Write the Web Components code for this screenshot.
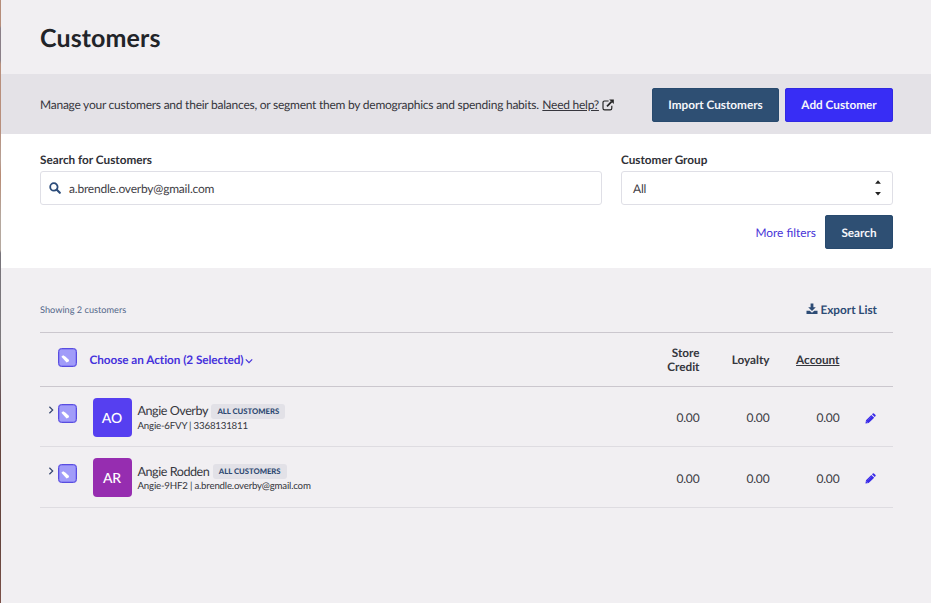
<!DOCTYPE html>
<html lang="en">
<head>
<meta charset="utf-8">
<title>Customers</title>
<style>
html,body{margin:0;height:100%;overflow:hidden}
body{font-family:Lato,"Liberation Sans",sans-serif;font-size:11.75px;color:#3a3b42;background:#f1eff2;text-rendering:geometricPrecision}
</style>
</head>
<body>
<customers-page></customers-page>
<script>
const define = (name, markup, setup) => {
  const t = document.createElement('template');
  t.innerHTML = '<style>*{box-sizing:border-box}:host{box-sizing:border-box}</style>' + markup;
  customElements.define(name, class extends HTMLElement {
    constructor() {
      super();
      this.attachShadow({mode: 'open'}).appendChild(t.content.cloneNode(true));
    }
    connectedCallback() { if (setup) setup(this, this.shadowRoot); }
  });
};

const icons = {
  search: ['0 0 12 12', '<circle cx="4.9" cy="4.9" r="3.7" fill="none" stroke="currentColor" stroke-width="1.8"/><path d="M7.8 7.8 10.8 10.8" stroke="currentColor" stroke-width="2.1" stroke-linecap="round"/>'],
  external: ['0 0 12 12', '<path d="M6.6 2H2.6Q1 2 1 3.6v5.6Q1 10.8 2.6 10.8h5.6Q9.8 10.8 9.8 9.2V6.8" fill="none" stroke="currentColor" stroke-width="1.15"/><path d="M5 7.4 9.6 2.6" stroke="currentColor" stroke-width="1.7"/><path d="M7.2.5h4.6v4.6z" fill="currentColor"/>'],
  download: ['0 0 12 12', '<path fill="currentColor" d="M4.6.6h2.8v3.6h2.4L6 8 2.2 4.2h2.4zM.5 7.7h3.2L6 9.7l2.3-2h3.2v3.4H.5z"/>'],
  down: ['0 0 8 8', '<path d="M.8 2.4 4 5.6 7.2 2.4" fill="none" stroke="currentColor" stroke-width="1.2"/>'],
  right: ['0 0 8 8', '<path d="M2.4.8 5.7 4 2.4 7.2" fill="none" stroke="currentColor" stroke-width="1.2"/>'],
  sort: ['0 0 8 18', '<path fill="#222" d="M1.1 4.8 4 1.2 6.9 4.8zM1.1 13 4 16.4 6.9 13z"/>'],
  pencil: ['0 0 12 12', '<path fill="currentColor" d="M.5 11.5 1.1 8 6.9 2.1l3.1 3L4 10.9zM7.6 1.4l.9-.9q.7-.5 1.3 0l1.7 1.6q.5.7 0 1.3l-.9 1z"/><path d="M2.9 8 7.1 3.9" stroke="#8f87fa" stroke-width=".4"/><path d="m1.6 9.3 1.2 1.2" stroke="#ddd9fa" stroke-width=".6"/>'],
  tick: ['0 0 19 19', '<path d="M3.4 8.8 5.1 7.2 7.6 8.8 11.1 11.9 10.7 13.4 8.6 14.5z" fill="#fff"/>']
};
define('ui-icon', '<style>:host{display:inline-block;flex:none;line-height:0}div,svg{display:block;width:100%;height:100%}</style><div></div>', (el, root) => {
  const [box, body] = icons[el.getAttribute('name')];
  root.querySelector('div').innerHTML = `<svg viewBox="${box}">${body}</svg>`;
});

define('ui-button', `<style>
:host{display:flex;align-items:center;justify-content:center;height:34px;border-radius:3px;background:#2e4f73;color:#f4f5fa;font-weight:700;box-shadow:inset 0 0 0 1px #284a6e}
:host([primary]){background:#382df5;box-shadow:inset 0 0 0 1px #3029e2}
</style><slot></slot>`);

define('ui-field', `<style>
:host{display:block}
label{display:block;font-weight:700;line-height:16px;color:#303137;padding-bottom:1px}
.box{display:flex;align-items:center;height:34px;margin-top:2px;border:1.5px solid #dfdfe6;border-radius:3px;background:#fff;padding:0 10px 0 8px}
.value{flex:1;color:#3f4046;font-size:12px;letter-spacing:-.2px;padding-top:1px}
</style><label></label><div class="box"><slot name="before"></slot><span class="value"><slot></slot></span><slot name="after"></slot></div>`,
(el, root) => { root.querySelector('label').textContent = el.getAttribute('label'); });

define('ui-checkbox', `<style>
:host{display:block;width:19px;height:19px;border:1px solid #594de0;border-radius:3.5px;background:#a19cf9;box-shadow:inset 0 0 0 .5px #766df0}
ui-icon{display:block;width:19px;height:19px;margin:-1px}
</style><ui-icon name="tick"></ui-icon>`);

define('page-header', `<style>
:host{display:flex;align-items:center;height:74px;padding:1px 38px 0 39px}
h1{margin:0;font-size:25px;font-weight:700;line-height:30px;color:#222429;letter-spacing:.1px}
</style><h1><slot></slot></h1>`);

define('intro-bar', `<style>
:host{display:flex;align-items:center;height:60px;padding:1px 38px 0 39px;background:#e4e2e7;color:#36363d}
.text{flex:1;display:flex;align-items:center;white-space:nowrap;font-size:12px;letter-spacing:-.245px}
.text a{text-decoration:underline;margin-left:3.5px}
.text ui-icon{width:12px;height:12px;margin-left:3.5px;color:#222}
.actions{display:flex;gap:6px}
.import{width:127px}.add{width:108px}
</style>
<div class="text"><span>Manage your customers and their balances, or segment them by demographics and spending habits.</span><a>Need help?</a><ui-icon name="external"></ui-icon></div>
<div class="actions"><ui-button class="import">Import Customers</ui-button><ui-button class="add" primary>Add Customer</ui-button></div>`);

define('search-panel', `<style>
:host{display:block;height:134px;padding:18px 38px 0 39px;background:#fff}
.fields{display:grid;grid-template-columns:562px 272px;gap:19px}
.glass{width:12px;height:12px;margin-right:8px;color:#2c4c7a}
.all{padding-left:3px}
.sort{width:8px;height:18px}
.actions{display:flex;align-items:center;justify-content:flex-end;gap:9px;margin-top:10px}
.more{color:#4a36d8;font-size:11.9px}
.go{width:68px}
</style>
<div class="fields">
<ui-field label="Search for Customers"><ui-icon class="glass" slot="before" name="search"></ui-icon>a.brendle.overby@gmail.com</ui-field>
<ui-field label="Customer Group"><span class="all">All</span><ui-icon class="sort" slot="after" name="sort"></ui-icon></ui-field>
</div>
<div class="actions"><a class="more">More filters</a><ui-button class="go">Search</ui-button></div>`);

define('customer-row', `<style>
:host{display:grid;grid-template-columns:18px 34.5px 45px 1fr 70px 70px 70px 53.5px;height:60.5px;border-bottom:1px solid #dedce1;align-items:start}
.chev{width:8px;height:8px;margin:19.5px 0 0 6.5px;color:#35456f}
ui-checkbox{margin-top:17px}
.avatar{display:flex;align-items:center;justify-content:center;width:39px;height:39px;margin-top:11px;border-radius:4px;color:#fff;font-size:14px;font-weight:500;letter-spacing:-.1px}
.name{display:flex;align-items:center;margin-top:16px;height:17px;font-size:12.6px;letter-spacing:-.46px;line-height:17px;color:#37383f}
.name slot{display:block;margin-top:-1px}
.tag{margin-left:3.5px;padding:0 6px;height:15px;line-height:15px;border-radius:3px;background:#e2e1e7;color:#2f4a73;font-size:7.7px;font-weight:900;white-space:nowrap;letter-spacing:0}
.sub{font-size:9.7px;letter-spacing:-.2px;line-height:12px;white-space:nowrap;color:#36373d}
.num{text-align:right;font-size:12px;letter-spacing:-.15px;line-height:16px;margin-top:23.5px}
.pen{width:11px;height:11px;margin:26px 0 0 25.5px;color:#3a2be8}
</style>
<ui-icon class="chev" name="right"></ui-icon><ui-checkbox></ui-checkbox><div class="avatar"></div>
<div><div class="name"><slot name="name"></slot><span class="tag">ALL CUSTOMERS</span></div><div class="sub"><slot></slot></div></div>
<span class="num">0.00</span><span class="num">0.00</span><span class="num">0.00</span><ui-icon class="pen" name="pencil"></ui-icon>`,
(el, root) => {
  const a = root.querySelector('.avatar');
  a.textContent = el.getAttribute('initials');
  a.style.background = el.getAttribute('color');
});

define('customer-list', `<style>
:host{display:block;padding:0 38px 0 39px}
.top{display:flex;align-items:center;justify-content:space-between;height:64px;padding:18px 16px 0 0;color:#54678a;font-size:9.2px}
.export{display:flex;align-items:center;gap:2px;color:#2d4b75;font-size:11.75px;font-weight:700}
.export ui-icon{width:12px;height:12px}
.head{display:grid;grid-template-columns:18px 32px 1fr 70px 70px 70px 53.5px;height:54.5px;align-items:center;border-top:1px solid #cbc7ce;border-bottom:1px solid #cbc7ce;font-weight:700;line-height:14px;color:#35363d}
.head ui-checkbox{grid-column:2;margin-top:-3px}
.action{display:flex;align-items:center;gap:1.5px;color:#4632dc;margin-left:-.5px;letter-spacing:-.05px}
.action ui-icon{width:8px;height:8px;margin-top:1px}
.r{text-align:right}
.r,.action{padding-top:1.5px}
.u{text-decoration:underline}
</style>
<div class="top"><span>Showing 2 customers</span><span class="export"><ui-icon name="download"></ui-icon>Export List</span></div>
<div class="head"><ui-checkbox></ui-checkbox><span class="action">Choose an Action (2 Selected)<ui-icon name="down"></ui-icon></span><span class="r">Store<br>Credit</span><span class="r">Loyalty</span><span class="r u">Account</span></div>
<customer-row initials="AO" color="#563ff0"><span slot="name">Angie Overby</span>Angie-6FVY | 3368131811</customer-row>
<customer-row initials="AR" color="#962db0"><span slot="name">Angie Rodden</span>Angie-9HF2 | a.brendle.overby@gmail.com</customer-row>`);

define('customers-page', `<style>
:host{display:grid;grid-template-columns:1px minmax(0,1fr);height:100vh}
.edge{background:linear-gradient(#b58d7a 0 26px,#8a7f88 28px 60px,#b88f7c 64px 130px,#b7a196 160px,#b98b74 175px,#b5a89e 217px 250px,#77737a 253px,#7d797c 340px,#675052 400px,#65443d 450px 545px,#7c5148 603px)}
</style><div class="edge"></div><main><page-header>Customers</page-header><intro-bar></intro-bar><search-panel></search-panel><customer-list></customer-list></main>`);
</script>
</body>
</html>
